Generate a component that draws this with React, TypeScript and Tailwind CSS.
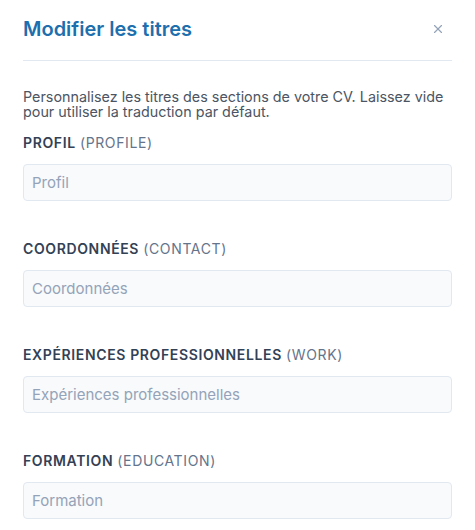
import { X } from "lucide-react";

const sections = [
  { label: "PROFIL", key: "PROFILE", placeholder: "Profil" },
  { label: "COORDONNÉES", key: "CONTACT", placeholder: "Coordonnées" },
  { label: "EXPÉRIENCES PROFESSIONNELLES", key: "WORK", placeholder: "Expériences professionnelles" },
  { label: "FORMATION", key: "EDUCATION", placeholder: "Formation" },
];

export default function App() {
  return (
    <div className="min-h-screen bg-white px-[23px] pt-[15px] font-['Inter',sans-serif]">
      <div className="flex items-center justify-between pb-[17px] border-b border-[#e2e8f0]">
        <h2 className="text-[20px] font-semibold text-[#1d6fae] leading-7">Modifier les titres</h2>
        <button className="text-[#94a3b8] mr-[7px]">
          <X size={14} strokeWidth={2} />
        </button>
      </div>

      <p className="mt-[28px] text-[14.35px] leading-[15px] text-[#4b5563]">
        Personnalisez les titres des sections de votre CV. Laissez vide pour utiliser la traduction par défaut.
      </p>

      <div className="mt-[14px] flex flex-col gap-[38px]">
        {sections.map((s) => (
          <div key={s.key}>
            <label className="block text-[14px] font-semibold tracking-[0.045em] text-[#334155] leading-5 mb-[11px]">
              {s.label} <span className="font-normal text-[#64748b]">({s.key})</span>
            </label>
            <input
              type="text"
              placeholder={s.placeholder}
              className="w-full h-[37px] px-[8px] rounded-[4px] border border-[#e2e8f0] bg-[#f8fafc] text-[15px] placeholder:text-[#94a3b8] focus:outline-none"
            />
          </div>
        ))}
      </div>
    </div>
  );
}
